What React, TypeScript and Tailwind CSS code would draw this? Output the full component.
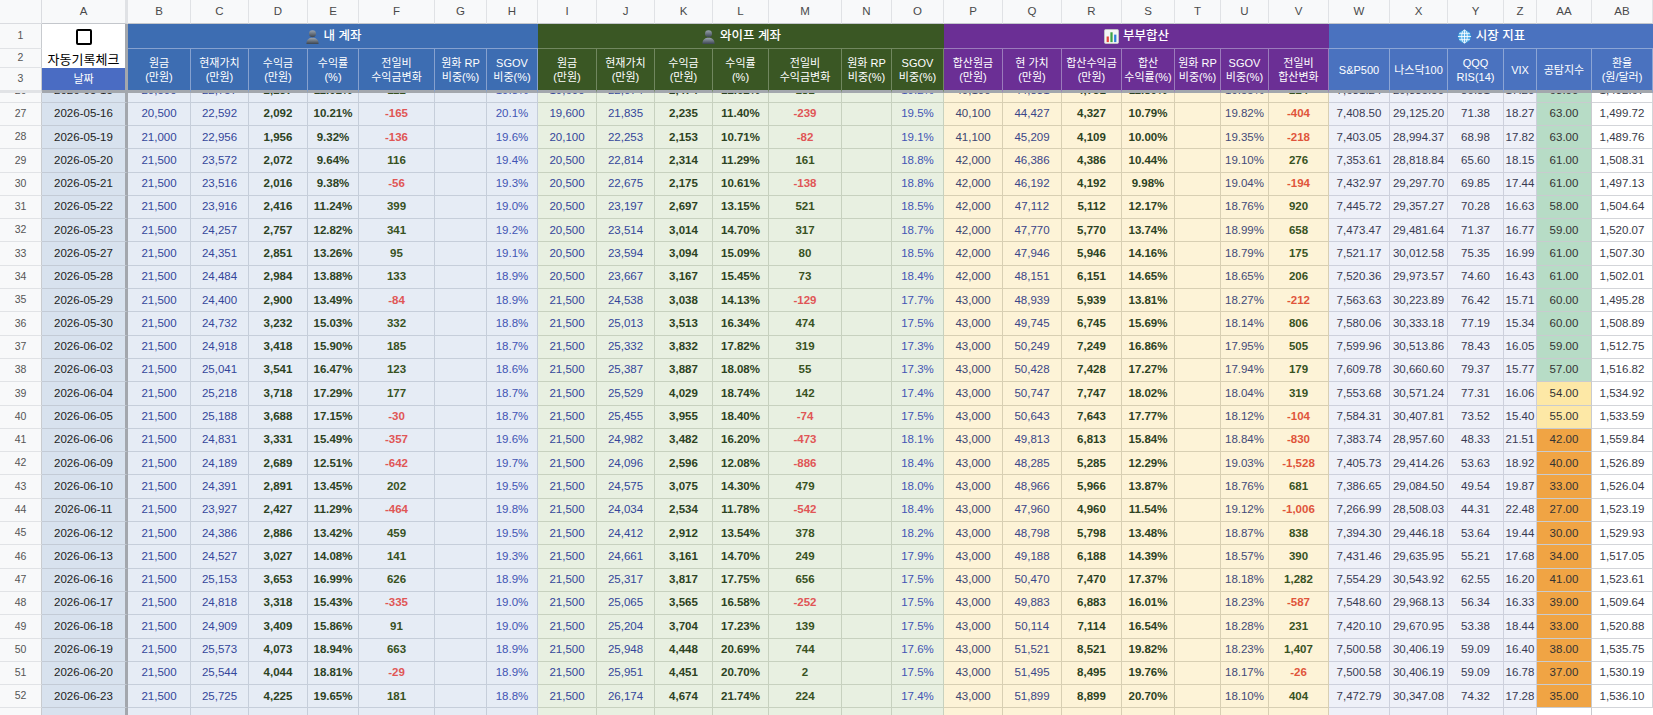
import React from 'react'

const GRID =
  'grid grid-cols-[42px_86px_63px_58px_59px_51px_76px_52px_51px_59px_58px_58px_56px_73px_50px_52px_59px_59px_60px_53px_46px_48px_60px_61px_58px_56px_33px_55px_61px]'

const LETTERS = [
  'A', 'B', 'C', 'D', 'E', 'F', 'G', 'H', 'I', 'J', 'K', 'L', 'M', 'N',
  'O', 'P', 'Q', 'R', 'S', 'T', 'U', 'V', 'W', 'X', 'Y', 'Z', 'AA', 'AB',
]

// row 26 is scrolled under the frozen header, only its bottom shows
const RAW = `26|2026-05-15|20,500|22,757|2,257|11.01%|112||19.8%|19,600|22,074|2,474|12.62%|181||19.2%|40,100|44,831|4,731|11.80%||19.55%|214|7,631.24|29,335.50|80.81|17.20|63.00|1,492.67
27|2026-05-16|20,500|22,592|2,092|10.21%|-165||20.1%|19,600|21,835|2,235|11.40%|-239||19.5%|40,100|44,427|4,327|10.79%||19.82%|-404|7,408.50|29,125.20|71.38|18.27|63.00|1,499.72
28|2026-05-19|21,000|22,956|1,956|9.32%|-136||19.6%|20,100|22,253|2,153|10.71%|-82||19.1%|41,100|45,209|4,109|10.00%||19.35%|-218|7,403.05|28,994.37|68.98|17.82|63.00|1,489.76
29|2026-05-20|21,500|23,572|2,072|9.64%|116||19.4%|20,500|22,814|2,314|11.29%|161||18.8%|42,000|46,386|4,386|10.44%||19.10%|276|7,353.61|28,818.84|65.60|18.15|61.00|1,508.31
30|2026-05-21|21,500|23,516|2,016|9.38%|-56||19.3%|20,500|22,675|2,175|10.61%|-138||18.8%|42,000|46,192|4,192|9.98%||19.04%|-194|7,432.97|29,297.70|69.85|17.44|61.00|1,497.13
31|2026-05-22|21,500|23,916|2,416|11.24%|399||19.0%|20,500|23,197|2,697|13.15%|521||18.5%|42,000|47,112|5,112|12.17%||18.76%|920|7,445.72|29,357.27|70.28|16.63|58.00|1,504.64
32|2026-05-23|21,500|24,257|2,757|12.82%|341||19.2%|20,500|23,514|3,014|14.70%|317||18.7%|42,000|47,770|5,770|13.74%||18.99%|658|7,473.47|29,481.64|71.37|16.77|59.00|1,520.07
33|2026-05-27|21,500|24,351|2,851|13.26%|95||19.1%|20,500|23,594|3,094|15.09%|80||18.5%|42,000|47,946|5,946|14.16%||18.79%|175|7,521.17|30,012.58|75.35|16.99|61.00|1,507.30
34|2026-05-28|21,500|24,484|2,984|13.88%|133||18.9%|20,500|23,667|3,167|15.45%|73||18.4%|42,000|48,151|6,151|14.65%||18.65%|206|7,520.36|29,973.57|74.60|16.43|61.00|1,502.01
35|2026-05-29|21,500|24,400|2,900|13.49%|-84||18.9%|21,500|24,538|3,038|14.13%|-129||17.7%|43,000|48,939|5,939|13.81%||18.27%|-212|7,563.63|30,223.89|76.42|15.71|60.00|1,495.28
36|2026-05-30|21,500|24,732|3,232|15.03%|332||18.8%|21,500|25,013|3,513|16.34%|474||17.5%|43,000|49,745|6,745|15.69%||18.14%|806|7,580.06|30,333.18|77.19|15.34|60.00|1,508.89
37|2026-06-02|21,500|24,918|3,418|15.90%|185||18.7%|21,500|25,332|3,832|17.82%|319||17.3%|43,000|50,249|7,249|16.86%||17.95%|505|7,599.96|30,513.86|78.43|16.05|59.00|1,512.75
38|2026-06-03|21,500|25,041|3,541|16.47%|123||18.6%|21,500|25,387|3,887|18.08%|55||17.3%|43,000|50,428|7,428|17.27%||17.94%|179|7,609.78|30,660.60|79.37|15.77|57.00|1,516.82
39|2026-06-04|21,500|25,218|3,718|17.29%|177||18.7%|21,500|25,529|4,029|18.74%|142||17.4%|43,000|50,747|7,747|18.02%||18.04%|319|7,553.68|30,571.24|77.31|16.06|54.00|1,534.92
40|2026-06-05|21,500|25,188|3,688|17.15%|-30||18.7%|21,500|25,455|3,955|18.40%|-74||17.5%|43,000|50,643|7,643|17.77%||18.12%|-104|7,584.31|30,407.81|73.52|15.40|55.00|1,533.59
41|2026-06-06|21,500|24,831|3,331|15.49%|-357||19.6%|21,500|24,982|3,482|16.20%|-473||18.1%|43,000|49,813|6,813|15.84%||18.84%|-830|7,383.74|28,957.60|48.33|21.51|42.00|1,559.84
42|2026-06-09|21,500|24,189|2,689|12.51%|-642||19.7%|21,500|24,096|2,596|12.08%|-886||18.4%|43,000|48,285|5,285|12.29%||19.03%|-1,528|7,405.73|29,414.26|53.63|18.92|40.00|1,526.89
43|2026-06-10|21,500|24,391|2,891|13.45%|202||19.5%|21,500|24,575|3,075|14.30%|479||18.0%|43,000|48,966|5,966|13.87%||18.76%|681|7,386.65|29,084.50|49.54|19.87|33.00|1,526.04
44|2026-06-11|21,500|23,927|2,427|11.29%|-464||19.8%|21,500|24,034|2,534|11.78%|-542||18.4%|43,000|47,960|4,960|11.54%||19.12%|-1,006|7,266.99|28,508.03|44.31|22.48|27.00|1,523.19
45|2026-06-12|21,500|24,386|2,886|13.42%|459||19.5%|21,500|24,412|2,912|13.54%|378||18.2%|43,000|48,798|5,798|13.48%||18.87%|838|7,394.30|29,446.18|53.64|19.44|30.00|1,529.93
46|2026-06-13|21,500|24,527|3,027|14.08%|141||19.3%|21,500|24,661|3,161|14.70%|249||17.9%|43,000|49,188|6,188|14.39%||18.57%|390|7,431.46|29,635.95|55.21|17.68|34.00|1,517.05
47|2026-06-16|21,500|25,153|3,653|16.99%|626||18.9%|21,500|25,317|3,817|17.75%|656||17.5%|43,000|50,470|7,470|17.37%||18.18%|1,282|7,554.29|30,543.92|62.55|16.20|41.00|1,523.61
48|2026-06-17|21,500|24,818|3,318|15.43%|-335||19.0%|21,500|25,065|3,565|16.58%|-252||17.5%|43,000|49,883|6,883|16.01%||18.23%|-587|7,548.60|29,968.13|56.34|16.33|39.00|1,509.64
49|2026-06-18|21,500|24,909|3,409|15.86%|91||19.0%|21,500|25,204|3,704|17.23%|139||17.5%|43,000|50,114|7,114|16.54%||18.28%|231|7,420.10|29,670.95|53.38|18.44|33.00|1,520.88
50|2026-06-19|21,500|25,573|4,073|18.94%|663||18.9%|21,500|25,948|4,448|20.69%|744||17.6%|43,000|51,521|8,521|19.82%||18.23%|1,407|7,500.58|30,406.19|59.09|16.40|38.00|1,535.75
51|2026-06-20|21,500|25,544|4,044|18.81%|-29||18.9%|21,500|25,951|4,451|20.70%|2||17.5%|43,000|51,495|8,495|19.76%||18.17%|-26|7,500.58|30,406.19|59.09|16.78|37.00|1,530.19
52|2026-06-23|21,500|25,725|4,225|19.65%|181||18.8%|21,500|26,174|4,674|21.74%|224||17.4%|43,000|51,899|8,899|20.70%||18.10%|404|7,472.79|30,347.08|74.32|17.28|35.00|1,536.10
53|||||||||||||||||||||||||||`

const ROWS = RAW.split('\n').map((line) => line.split('|'))

const blue = 'bg-[#e6ecf5] border-[#c6ceda]'
const green = 'bg-[#e8f0e1] border-[#c7d1bf]'
const yellow = 'bg-[#fdf3d7] border-[#d8cfb3]'
const lav = 'bg-[#eef0f8] border-[#cdd0dc]'

const navy = 'text-[#34469a]'
const bold = 'font-bold text-[#2c4222]'
const pct = 'text-[#4254b4]'

// one entry per column A..AB; signed columns pick red/green from the value
const COLS: { cls: string; signed?: boolean; neg?: string }[] = [
  { cls: 'bg-[#d8e2ee] border-[#c3cbd6] text-[#222] border-r-[3px] border-r-[#a3a7ad]' },
  { cls: `${blue} ${navy}` },
  { cls: `${blue} ${navy}` },
  { cls: `${blue} ${bold}` },
  { cls: `${blue} ${bold}` },
  { cls: `${blue} font-bold`, signed: true, neg: 'text-[#e05656]' },
  { cls: blue },
  { cls: `${blue} ${pct}` },
  { cls: `${green} ${navy}` },
  { cls: `${green} ${navy}` },
  { cls: `${green} ${bold}` },
  { cls: `${green} ${bold}` },
  { cls: `${green} font-bold`, signed: true, neg: 'text-[#e05656]' },
  { cls: green },
  { cls: `${green} ${pct}` },
  { cls: `${yellow} text-[#3e4570]` },
  { cls: `${yellow} text-[#3a4588]` },
  { cls: `${yellow} ${bold}` },
  { cls: `${yellow} ${bold}` },
  { cls: yellow },
  { cls: `${yellow} text-[#424a78]` },
  { cls: `${yellow} font-bold`, signed: true, neg: 'text-[#e0553b]' },
  { cls: `${lav} text-[#383a52]` },
  { cls: `${lav} text-[#383a52]` },
  { cls: `${lav} text-[#383a52]` },
  { cls: `${lav} text-[#383a52]` },
  { cls: 'border-[#c9cbcf] text-[#333]' },
  { cls: 'bg-white border-[#d3d5d9] text-[#383a48]' },
]

function fearColor(v: string) {
  if (!v) return 'bg-white'
  const n = parseFloat(v)
  if (n >= 57) return 'bg-[#b7dcc6]'
  if (n >= 50) return 'bg-[#fde8a6]'
  return 'bg-[#f0a444]'
}

function PersonIcon() {
  return (
    <svg width="15" height="15" viewBox="0 0 16 16" className="mr-1">
      <defs>
        <linearGradient id="bust" x1="0" y1="0" x2="0" y2="1">
          <stop offset="0" stopColor="#9aa4b0" />
          <stop offset="1" stopColor="#3b4450" />
        </linearGradient>
      </defs>
      <circle cx="8" cy="5" r="3.7" fill="url(#bust)" />
      <path d="M1.5 16C1.5 11.2 4.4 9.4 8 9.4s6.5 1.8 6.5 6.6Z" fill="url(#bust)" />
    </svg>
  )
}

function ChartIcon() {
  return (
    <svg width="15" height="15" viewBox="0 0 16 16" className="mr-1">
      <rect x="0.5" y="0.5" width="15" height="15" rx="1.5" fill="#f5f5f5" stroke="#c4c4c4" />
      <rect x="2.8" y="8" width="2.4" height="6" fill="#e8453c" />
      <rect x="6.8" y="3.5" width="2.4" height="10.5" fill="#3ca346" />
      <rect x="10.8" y="6" width="2.4" height="8" fill="#2f7fd8" />
    </svg>
  )
}

function GlobeIcon() {
  return (
    <svg width="15" height="15" viewBox="0 0 16 16" className="mr-1">
      <circle cx="8" cy="8" r="7" fill="#5db3ec" stroke="#2c80c4" strokeWidth="0.8" />
      <g fill="none" stroke="#fff" strokeWidth="0.9">
        <ellipse cx="8" cy="8" rx="3" ry="7" />
        <path d="M8 1v14M1 8h14M2.3 4.6h11.4M2.3 11.4h11.4" />
      </g>
    </svg>
  )
}

const GROUPS = [
  { label: '내 계좌', icon: <PersonIcon />, bg: 'bg-[#3d6db2]', line: 'border-[#86a1cf]', span: 'col-span-7' },
  { label: '와이프 계좌', icon: <PersonIcon />, bg: 'bg-[#3a5724]', line: 'border-[#71875f]', span: 'col-span-7' },
  { label: '부부합산', icon: <ChartIcon />, bg: 'bg-[#6b2f95]', line: 'border-[#9b7bbb]', span: 'col-span-7' },
  { label: '시장 지표', icon: <GlobeIcon />, bg: 'bg-[#4a72bf]', line: 'border-[#8ca5d5]', span: 'col-span-6' },
]

const HEADERS: [string, string, number][] = [
  ['원금', '(만원)', 0],
  ['현재가치', '(만원)', 0],
  ['수익금', '(만원)', 0],
  ['수익률', '(%)', 0],
  ['전일비', '수익금변화', 0],
  ['원화 RP', '비중(%)', 0],
  ['SGOV', '비중(%)', 0],
  ['원금', '(만원)', 1],
  ['현재가치', '(만원)', 1],
  ['수익금', '(만원)', 1],
  ['수익률', '(%)', 1],
  ['전일비', '수익금변화', 1],
  ['원화 RP', '비중(%)', 1],
  ['SGOV', '비중(%)', 1],
  ['합산원금', '(만원)', 2],
  ['현 가치', '(만원)', 2],
  ['합산수익금', '(만원)', 2],
  ['합산', '수익률(%)', 2],
  ['원화 RP', '비중(%)', 2],
  ['SGOV', '비중(%)', 2],
  ['전일비', '합산변화', 2],
  ['S&P500', '', 3],
  ['나스닥100', '', 3],
  ['QQQ', 'RIS(14)', 3],
  ['VIX', '', 3],
  ['공탐지수', '', 3],
  ['환율', '(원/달러)', 3],
]

const rowNum = 'flex items-center justify-center bg-[#f8f9fa] text-[10.5px] text-[#555] border-r border-b border-r-[#c8cbcf] border-b-[#e1e3e6]'

function Header() {
  return (
    <div className={`${GRID} grid-rows-[24px_25px_19px_25px]`}>
      {/* column letters */}
      <div className="bg-[#f8f9fa] border-r border-b border-[#dadce0]" />
      {LETTERS.map((l, i) => (
        <div
          key={l}
          className={`flex items-center justify-center bg-[#f8f9fa] text-[11.5px] text-[#4a4a4a] border-b border-r border-b-[#c4c7cc] border-r-[#e0e2e5] ${
            i === 0 ? 'border-r-[3px] border-r-[#a3a7ad]' : ''
          }`}
        >
          {l}
        </div>
      ))}

      {/* row 1 */}
      <div className={rowNum}>1</div>
      <div className="flex items-center justify-center bg-white border-r-[3px] border-r-[#a3a7ad]">
        <div className="w-[16px] h-[16px] border-2 border-black rounded-[2px]" />
      </div>
      {GROUPS.map((g) => (
        <div
          key={g.label}
          className={`${g.span} ${g.bg} ${g.line} border-b flex items-center justify-center text-white text-[12.5px] font-medium`}
        >
          {g.icon}
          {g.label}
        </div>
      ))}

      {/* row 2 */}
      <div className={rowNum}>2</div>
      <div className="flex items-center justify-center bg-white text-[13px] text-black border-r-[3px] border-r-[#a3a7ad] font-['Noto_Sans_CJK_KR',sans-serif]">
        자동기록체크
      </div>
      {HEADERS.map(([a, b, g], i) => (
        <div
          key={i}
          className={`row-span-2 flex flex-col items-center justify-center text-center text-white text-[11px] leading-[14px] border-r border-b-[3px] border-b-[#a3a7ad] ${GROUPS[g].bg} ${GROUPS[g].line}`}
        >
          <span>{a}</span>
          {b && <span>{b}</span>}
        </div>
      ))}

      {/* row 3 */}
      <div className={`${rowNum} col-start-1 row-start-4 border-b-[3px] border-b-[#a3a7ad]`}>3</div>
      <div className="col-start-2 row-start-4 flex items-center justify-center bg-[#4a6cc3] text-white text-[11px] border-r-[3px] border-r-[#a3a7ad] border-b-[3px] border-b-[#a3a7ad]">
        날짜
      </div>
    </div>
  )
}

function Row({ cells }: { cells: string[] }) {
  const [num, ...vals] = cells
  return (
    <div className={`${GRID} h-[23.3px] shrink-0`}>
      <div className={rowNum}>{num}</div>
      {vals.map((v, i) => {
        const c = COLS[i]
        let color = ''
        if (c.signed && v) color = v.startsWith('-') ? c.neg! : 'text-[#38521f]'
        const extra = i === 26 ? fearColor(v) : ''
        return (
          <div
            key={i}
            className={`flex items-center justify-center border-r border-b whitespace-nowrap overflow-hidden text-[11.5px] ${c.cls} ${color} ${extra}`}
          >
            {v}
          </div>
        )
      })}
    </div>
  )
}

export default function App() {
  return (
    <div className="w-[1653px] h-[715px] overflow-hidden bg-white font-['Liberation_Sans','Noto_Sans_CJK_KR',sans-serif]">
      <Header />
      <div className="h-[622px] overflow-hidden">
        <div className="-mt-[13.6px] flex flex-col">
          {ROWS.map((r) => (
            <Row key={r[0]} cells={r} />
          ))}
        </div>
      </div>
    </div>
  )
}
